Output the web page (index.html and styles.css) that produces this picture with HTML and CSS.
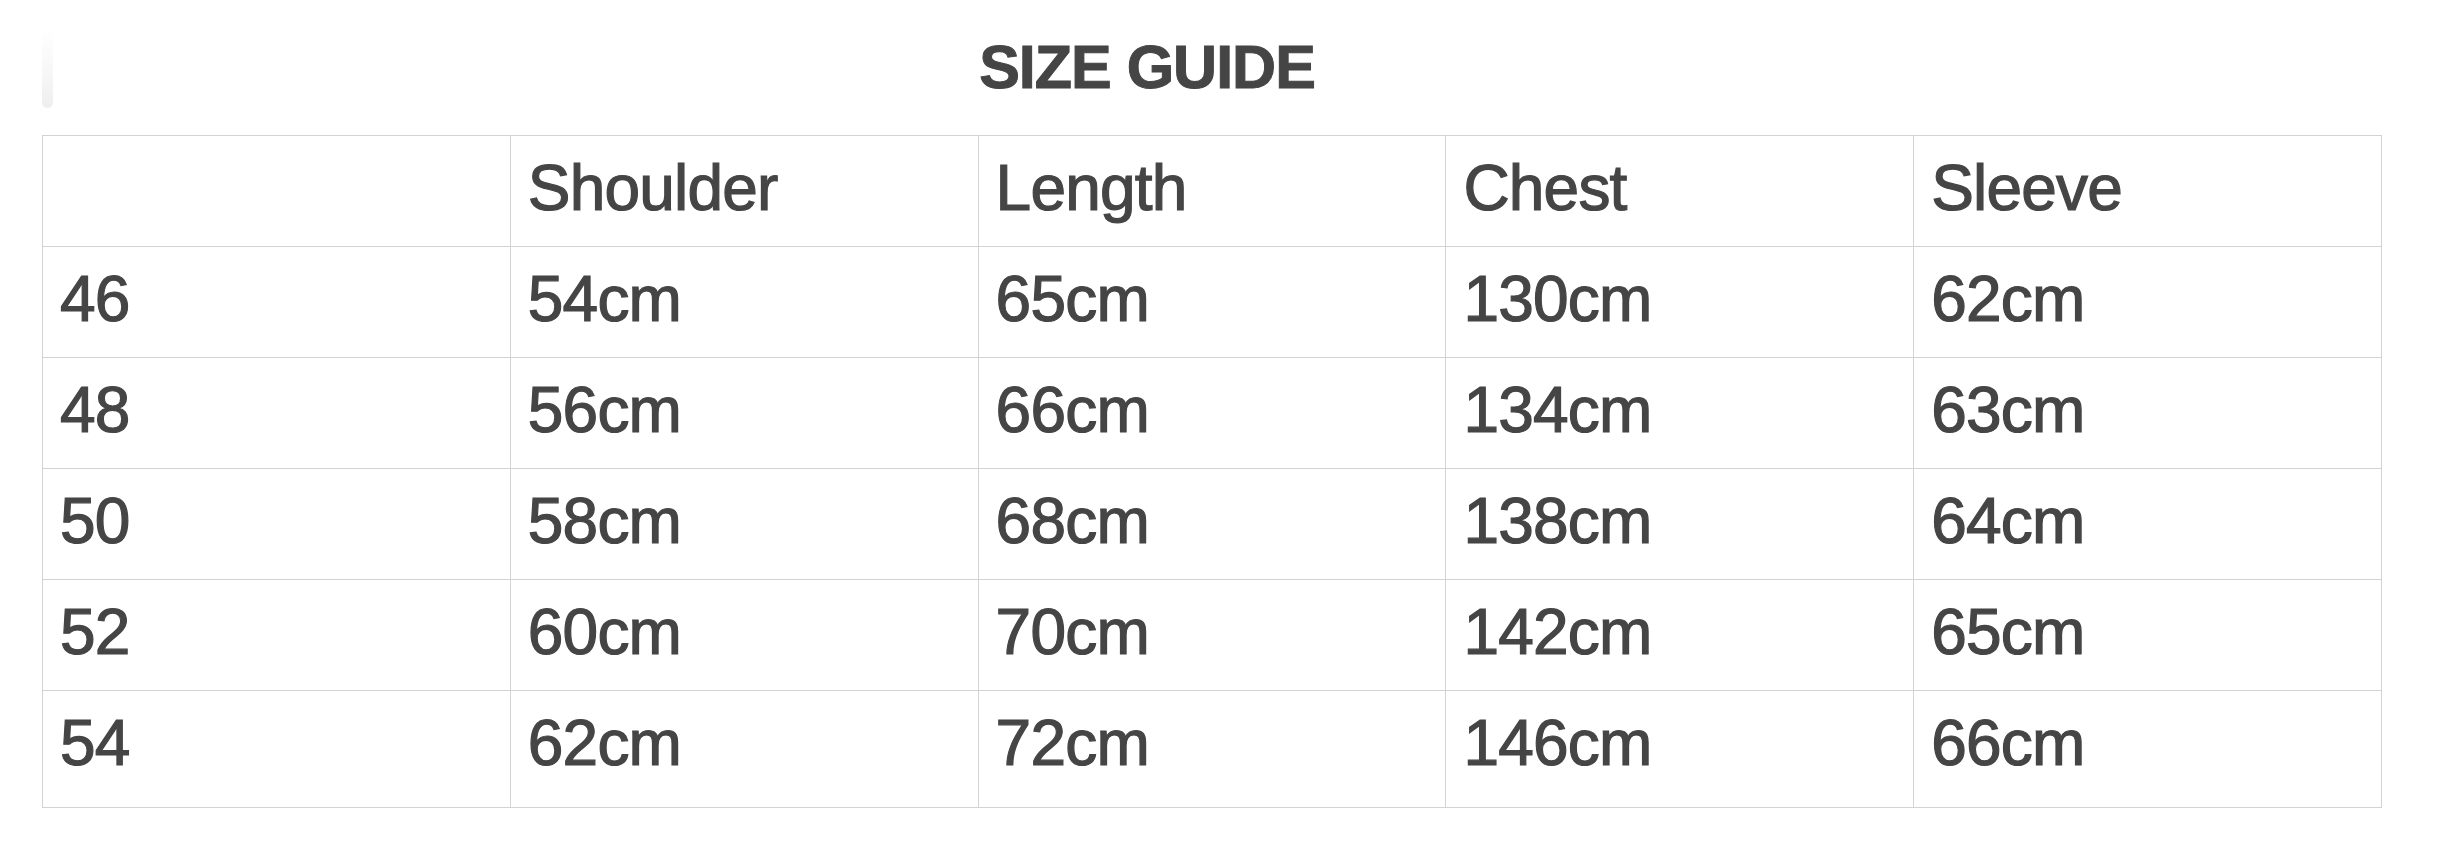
FILE: index.html
```html
<!DOCTYPE html>
<html lang="en">
<head>
<meta charset="utf-8">
<title>Size Guide</title>
<link rel="stylesheet" href="styles.css">
</head>
<body>
<div class="page">
  <div class="header">
    <div class="pill"></div>
    <h1 class="title">SIZE GUIDE</h1>
  </div>
  <table class="size-table">
    <thead>
      <tr><th></th><th>Shoulder</th><th>Length</th><th>Chest</th><th>Sleeve</th></tr>
    </thead>
    <tbody>
      <tr><td>46</td><td>54cm</td><td>65cm</td><td>130cm</td><td>62cm</td></tr>
      <tr><td>48</td><td>56cm</td><td>66cm</td><td>134cm</td><td>63cm</td></tr>
      <tr><td>50</td><td>58cm</td><td>68cm</td><td>138cm</td><td>64cm</td></tr>
      <tr><td>52</td><td>60cm</td><td>70cm</td><td>142cm</td><td>65cm</td></tr>
      <tr class="last"><td>54</td><td>62cm</td><td>72cm</td><td>146cm</td><td>66cm</td></tr>
    </tbody>
  </table>
</div>
</body>
</html>
```

FILE: styles.css
```css
html, body {
  margin: 0;
  padding: 0;
  background: #ffffff;
}

.page {
  padding: 30px 0 0 42px;
  font-family: "Liberation Sans", Arial, sans-serif;
  color: #454545;
}

.header {
  display: flex;
  align-items: flex-start;
  height: 105px;
  width: 2199px;
}

.pill {
  width: 11px;
  height: 78px;
  border-radius: 6px;
  background: linear-gradient(to bottom, #ffffff 0%, #f6f6f6 60%, #eeeeee 100%);
  flex: none;
}

.title {
  flex: 1;
  margin: 0;
  padding-top: 7px;
  font-size: 61px;
  line-height: 61px;
  font-weight: 700;
  letter-spacing: -1px;
  text-align: center;
  color: #454545;
  -webkit-text-stroke: 1px #454545;
}

.size-table {
  width: 2340px;
  table-layout: fixed;
  border-collapse: collapse;
  border: 1px solid #d3d3d3;
}

.size-table th,
.size-table td {
  border: 1px solid #d3d3d3;
  height: 111px;
  padding: 0 16px 6px 17px;
  text-align: left;
  vertical-align: middle;
  font-size: 64px;
  font-weight: 400;
  letter-spacing: -0.8px;
  color: #454545;
  -webkit-text-stroke: 1.2px #454545;
  box-sizing: border-box;
}

.size-table tr.last td {
  height: 117px;
  padding-bottom: 12px;
}
```
